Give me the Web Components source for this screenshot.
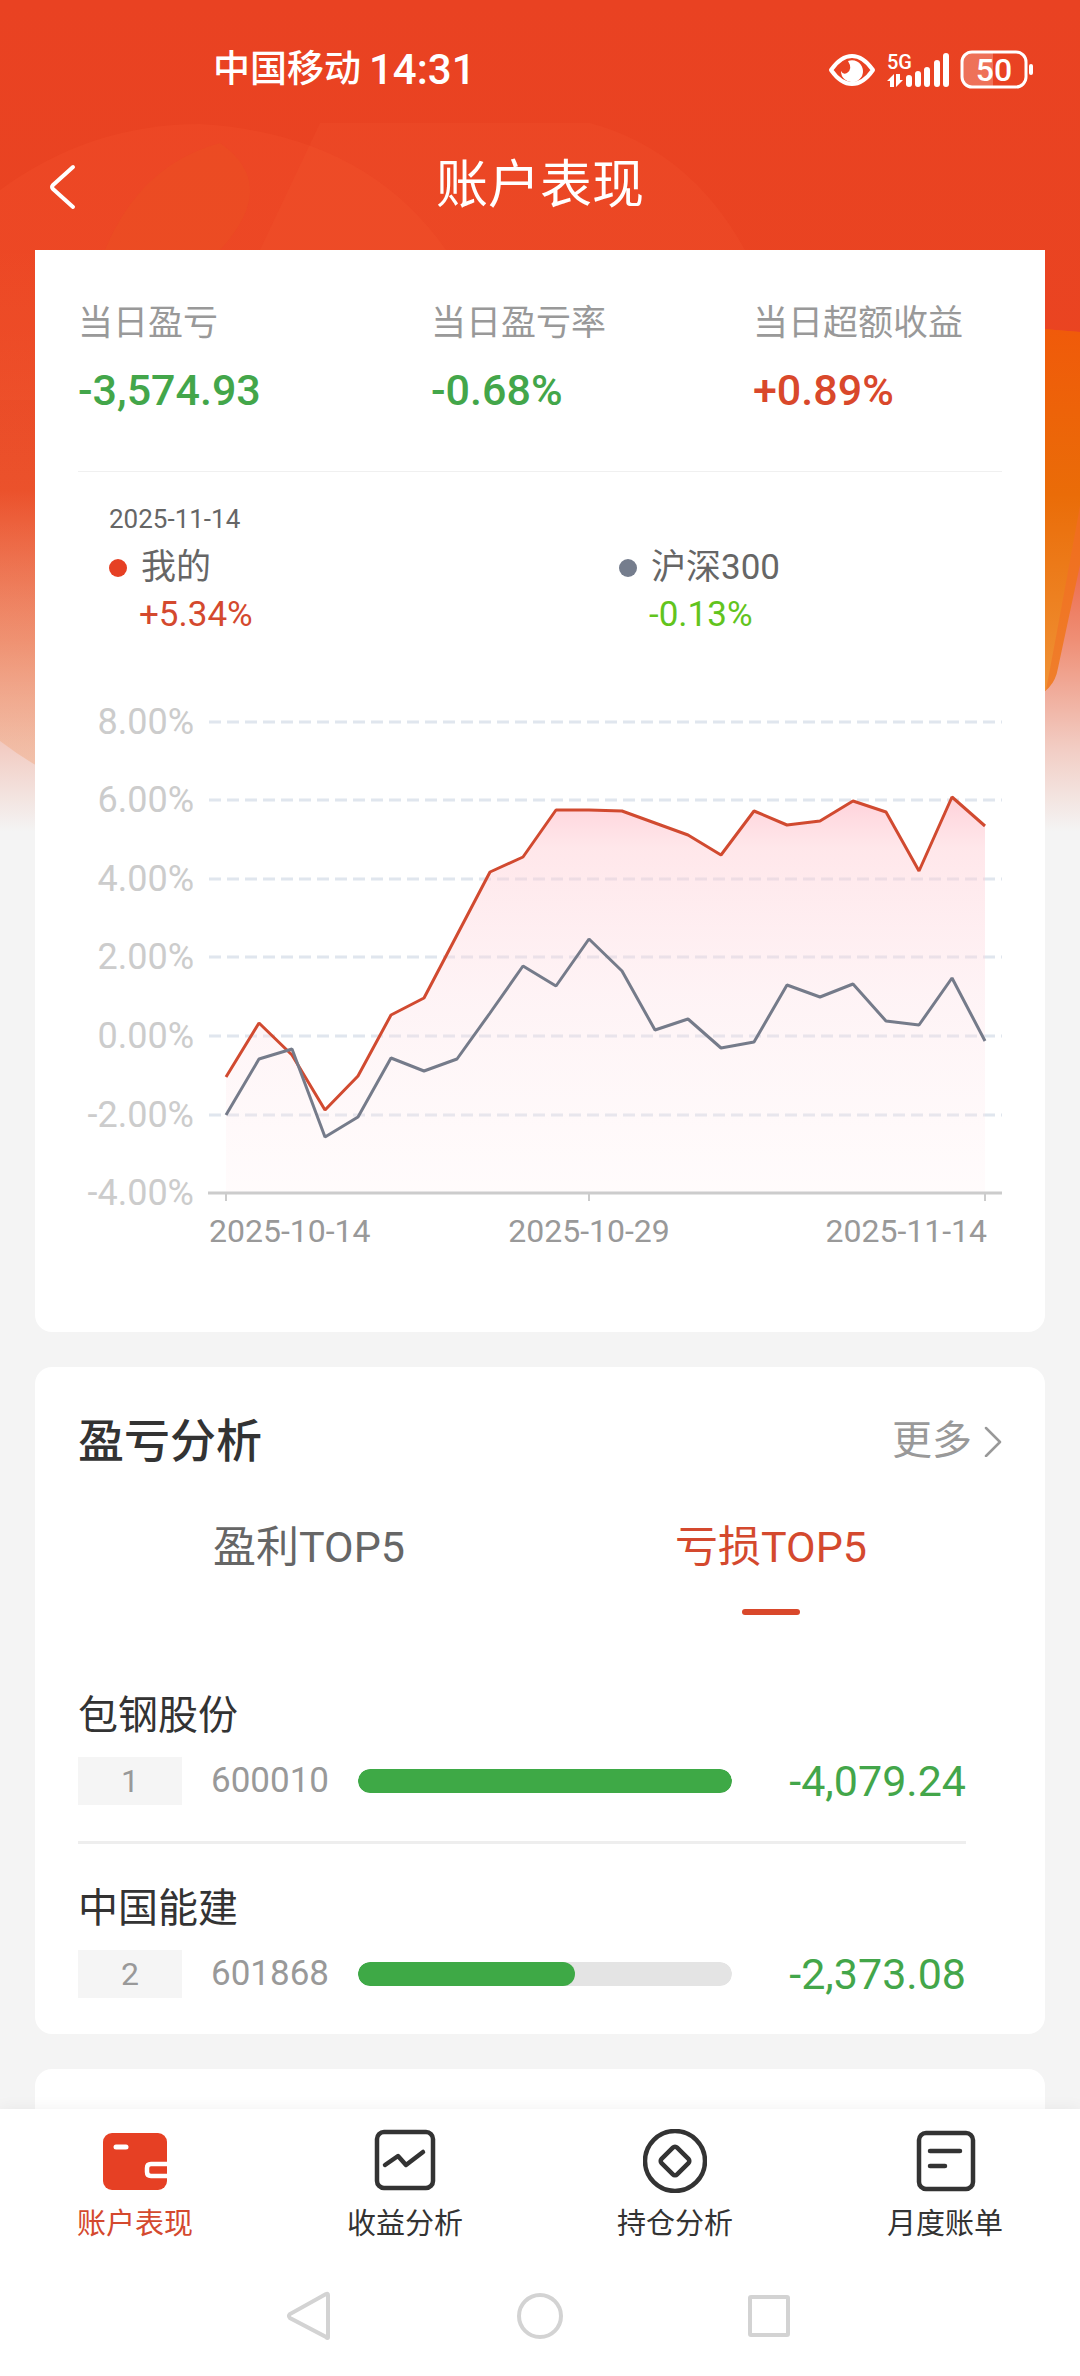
<!DOCTYPE html>
<html lang="zh-CN">
<head>
<meta charset="utf-8">
<meta name="viewport" content="width=device-width, initial-scale=1">
<title>账户表现</title>
<style>
  body {
    margin: 0;
    background: #f4f4f4;
    color: #333;
    font-family: Roboto, "Noto Sans CJK SC", sans-serif;
  }
</style>
</head>
<body>
<account-page></account-page>

<script>
// fondo degradado con las formas decorativas
class PageBackdrop extends HTMLElement {
  connectedCallback() {
    this.attachShadow({ mode: "open" }).innerHTML = `
      <style>
        :host { display: block; height: 832px; }
        svg { display: block; width: 100%; height: 100%; }
      </style>
      <svg viewBox="0 0 1080 832" preserveAspectRatio="none" aria-hidden="true">
        <defs>
          <linearGradient id="fade" x1="0" y1="0" x2="0" y2="1">
            <stop offset="0" stop-color="#e94222"/>
            <stop offset=".59" stop-color="#ea4521"/>
            <stop offset=".77" stop-color="#ef8f76"/>
            <stop offset=".9" stop-color="#f2cdc4"/>
            <stop offset="1" stop-color="#f4f4f4"/>
          </linearGradient>
          <linearGradient id="leaf" x1="0" y1="0" x2="0" y2="1">
            <stop offset="0" stop-color="#f05a0a"/>
            <stop offset=".45" stop-color="#ea6c08"/>
            <stop offset="1" stop-color="#f09438"/>
          </linearGradient>
          <linearGradient id="edge" x1="0" y1="0" x2="0" y2="1">
            <stop offset="0" stop-color="#f0580e"/>
            <stop offset="1" stop-color="#f0802c"/>
          </linearGradient>
          <linearGradient id="blob" x1="0" y1="0" x2="0" y2="1">
            <stop offset="0" stop-color="#f09060" stop-opacity="0"/>
            <stop offset="1" stop-color="#f09c68" stop-opacity=".35"/>
          </linearGradient>
        </defs>
        <rect width="1080" height="832" fill="url(#fade)"/>
        <path d="M0 250H60V778Q30 764 0 741Z" fill="url(#blob)"/>
        <path d="M320 123H590Q690 150 745 250H260Z" fill="#ff7040" opacity=".1"/>
        <path d="M0 190Q90 124 200 124Q365 134 446 250V400H0Z" fill="#ff6038" opacity=".14"/>
        <path d="M105 250Q140 165 220 143Q280 185 220 250Z" fill="#e85c20" opacity=".22"/>
        <path d="M1030 328L1080 332V565L1058 668Q1054 692 1030 698Z" fill="url(#edge)"/>
        <path d="M1030 328L1080 332V506L1058 626L1046 690L1030 698Z" fill="url(#leaf)"/>
      </svg>`;
  }
}

class StatusBar extends HTMLElement {
  connectedCallback() {
    this.attachShadow({ mode: "open" }).innerHTML = `
      <style>
        :host {
          display: flex;
          justify-content: space-between;
          align-items: center;
          box-sizing: border-box;
          height: 123px;
          padding: 16px 46px 0 213px;
          color: #fff;
        }
        .left, .right { display: flex; align-items: center; }
        .left { gap: 8px; font-weight: 500; line-height: 48px; }
        .carrier { font-size: 37px; }
        .time { font-size: 42px; }
        .right { gap: 10px; }
        svg { display: block; }
      </style>
      <div class="left">
        <span class="carrier">中国移动</span>
        <span class="time">14:31</span>
      </div>
      <div class="right">
        <svg width="48" height="36" viewBox="0 0 48 36" aria-hidden="true">
          <path d="M3 18C10 8 17 4 24 4S38 8 45 18C38 28 31 32 24 32S10 28 3 18Z" fill="none" stroke="#fff" stroke-width="4" stroke-linejoin="round"/>
          <path d="M20 9A11 11 0 1 1 13 19Q15 23 19 21Q25 17 20 9Z" fill="#fff"/>
        </svg>
        <svg width="64" height="48" viewBox="0 0 64 48" aria-hidden="true">
          <text x="1" y="23" font-size="20" font-weight="500" fill="#fff">5G</text>
          <path d="M23 32V38M32 28V38M41 24V38M51 17V38M60 10V38" stroke="#fff" stroke-width="6" stroke-linecap="round"/>
          <path d="M8 41V28L1 35H4V41ZM10 28V41L17 34H14V28Z" fill="#fff"/>
        </svg>
        <svg width="74" height="40" viewBox="0 0 74 40" aria-hidden="true">
          <path d="M11 3H33V37H11Q3 37 3 29V11Q3 3 11 3Z" fill="#fff" opacity=".25"/>
          <rect x="2" y="2" width="64" height="35" rx="10" fill="none" stroke="#fff" stroke-width="3"/>
          <rect x="69" y="14" width="4" height="11" rx="2" fill="#fff"/>
          <text x="34" y="31" font-size="32" font-weight="500" text-anchor="middle" fill="#fff">50</text>
        </svg>
      </div>`;
  }
}

class PageHeader extends HTMLElement {
  connectedCallback() {
    this.attachShadow({ mode: "open" }).innerHTML = `
      <style>
        :host {
          display: grid;
          grid-template-columns: 100px 1fr 100px;
          align-items: center;
          height: 127px;
          color: #fff;
        }
        button {
          border: 0;
          padding: 0 0 0 48px;
          background: none;
          color: inherit;
        }
        svg { display: block; }
        h1 {
          margin: 0;
          padding-bottom: 2px;
          font-size: 52px;
          font-weight: 400;
          line-height: 72px;
          text-align: center;
        }
      </style>
      <button type="button" aria-label="返回">
        <svg width="30" height="46" viewBox="0 0 30 46" fill="none" stroke="#fff" stroke-width="4" stroke-linecap="round" stroke-linejoin="round"><path d="M25 3L5 21Q3 23 5 25L25 43"/></svg>
      </button>
      <h1><slot></slot></h1>`;
  }
}

class AppCard extends HTMLElement {
  connectedCallback() {
    this.attachShadow({ mode: "open" }).innerHTML = `
      <style>
        :host {
          display: block;
          margin: 0 35px;
          padding: 0 43px;
          border-radius: 17px;
          background: #fff;
        }
        :host([flat]) { border-radius: 0 0 17px 17px; }
        :host([open]) { flex: 1; min-height: 40px; border-radius: 17px 17px 0 0; }
      </style>
      <slot></slot>`;
  }
}

class StatItem extends HTMLElement {
  connectedCallback() {
    this.attachShadow({ mode: "open" }).innerHTML = `
      <style>
        :host { display: block; color: #43a64a; }
        :host([up]) { color: #d9482b; }
        .label { color: #999; font-size: 35px; line-height: 48px; white-space: nowrap; }
        .value { margin-top: 12px; font-size: 43px; font-weight: 500; line-height: 60px; }
      </style>
      <div class="label">${this.getAttribute("label")}</div>
      <div class="value"><slot></slot></div>`;
  }
}

class LegendItem extends HTMLElement {
  connectedCallback() {
    this.attachShadow({ mode: "open" }).innerHTML = `
      <style>
        :host { display: block; font-size: 35px; line-height: 48px; }
        .name { display: flex; align-items: center; gap: 14px; color: #666; }
        .dot { width: 18px; height: 18px; border-radius: 50%; background: var(--dot); }
        .value { padding-left: 30px; line-height: 46px; color: var(--value); }
      </style>
      <div class="name"><span class="dot"></span>${this.getAttribute("name")}</div>
      <div class="value"><slot></slot></div>`;
  }
}

class TrendChart extends HTMLElement {
  connectedCallback() {
    const mine = [-1.04, 0.32, -0.48, -1.88, -1.03, 0.53, 0.96, 2.58, 4.18, 4.55, 5.75, 5.75,
      5.72, 5.43, 5.12, 4.61, 5.72, 5.36, 5.47, 5.97, 5.71, 4.19, 6.09, 5.34];
    const index = [-2.01, -0.58, -0.32, -2.56, -2.06, -0.55, -0.88, -0.58, 0.59, 1.78, 1.26, 2.47,
      1.66, 0.15, 0.43, -0.31, -0.14, 1.29, 0.98, 1.33, 0.39, 0.27, 1.48, -0.13];
    const x = (i) => 148 + i * 33;
    const y = (v) => Math.round(346 - v * 39.3);
    const points = (list) => list.map((v, i) => `${x(i)},${y(v)}`).join(" ");

    const grid = [8, 6, 4, 2, 0, -2]
      .map((v) => `<path d="M131 ${y(v)}H924" stroke="#e0e6ee" stroke-width="3" stroke-dasharray="12 6"/>`)
      .join("");
    const yLabels = [8, 6, 4, 2, 0, -2, -4]
      .map((v) => `<text x="116" y="${y(v) + 12}" font-size="36" text-anchor="end" fill="#ccc">${v.toFixed(2)}%</text>`)
      .join("");

    this.attachShadow({ mode: "open" }).innerHTML = `
      <style>
        :host { display: block; }
        svg { display: block; width: 100%; }
      </style>
      <svg viewBox="0 0 924 560" role="img" aria-label="收益走势">
        <defs>
          <linearGradient id="area" x1="0" y1="0" x2="0" y2="1">
            <stop offset="0" stop-color="#ffb9c6" stop-opacity=".65"/>
            <stop offset=".13" stop-color="#ffcdd4" stop-opacity=".48"/>
            <stop offset=".5" stop-color="#fddbe2" stop-opacity=".33"/>
            <stop offset="1" stop-color="#ffeef0" stop-opacity=".22"/>
          </linearGradient>
        </defs>
        ${grid}
        <polygon points="148,503 ${points(mine)} ${x(23)},503" fill="url(#area)"/>
        <path d="M130 503H924" stroke="#ccc" stroke-width="3"/>
        <path d="M148 503V511M511 503V511M907 503V511" stroke="#ccc" stroke-width="2"/>
        <polyline points="${points(mine)}" fill="none" stroke="#d14a30" stroke-width="3" stroke-linejoin="bevel"/>
        <polyline points="${points(index)}" fill="none" stroke="#757b8a" stroke-width="3" stroke-linejoin="bevel"/>
        ${yLabels}
        <g font-size="32" fill="#999">
          <text x="131" y="552">2025-10-14</text>
          <text x="511" y="552" text-anchor="middle">2025-10-29</text>
          <text x="909" y="552" text-anchor="end">2025-11-14</text>
        </g>
      </svg>`;
  }
}

class TopTabs extends HTMLElement {
  connectedCallback() {
    this.attachShadow({ mode: "open" }).innerHTML = `
      <style>
        :host { display: grid; grid-template-columns: 1fr 1fr; }
        button {
          display: flex;
          flex-direction: column;
          align-items: center;
          gap: 32px;
          border: 0;
          padding: 0;
          background: none;
          color: #666;
          font: inherit;
          font-size: 43px;
          line-height: 60px;
        }
        button::after {
          content: "";
          width: 58px;
          height: 6px;
          border-radius: 3px;
        }
        button[aria-selected="true"] { color: #d4492e; }
        button[aria-selected="true"]::after { background: #d9482b; }
      </style>
      <button type="button" role="tab" aria-selected="false">盈利TOP5</button>
      <button type="button" role="tab" aria-selected="true">亏损TOP5</button>`;
    this.setAttribute("role", "tablist");

    const tabs = this.shadowRoot.querySelectorAll("button");
    tabs.forEach((tab) => {
      tab.addEventListener("click", () => {
        tabs.forEach((t) => t.setAttribute("aria-selected", t === tab));
      });
    });
  }
}

class StockRow extends HTMLElement {
  connectedCallback() {
    const name = this.getAttribute("name");
    this.attachShadow({ mode: "open" }).innerHTML = `
      <style>
        :host { display: block; padding: 35px 0 36px; }
        :host(:not(:last-child)) { border-bottom: 3px solid #eee; }
        .name { color: #333; font-size: 40px; line-height: 60px; }
        .row { display: flex; align-items: center; gap: 29px; margin-top: 11px; height: 48px; }
        .rank {
          width: 104px;
          background: #f5f5f5;
          color: #999;
          font-size: 32px;
          line-height: 48px;
          text-align: center;
        }
        .code { width: 118px; color: #999; font-size: 35px; line-height: 48px; }
        progress {
          flex: 1;
          min-width: 0;
          height: 24px;
          appearance: none;
          border: 0;
          border-radius: 12px;
          overflow: hidden;
        }
        progress::-webkit-progress-bar { background: #e4e4e4; border-radius: 12px; }
        progress::-webkit-progress-value { background: #3ea946; border-radius: 12px; }
        .value { width: 205px; color: #43a64a; font-size: 43px; line-height: 48px; text-align: right; }
      </style>
      <div class="name">${name}</div>
      <div class="row">
        <span class="rank">${this.getAttribute("rank")}</span>
        <span class="code">${this.getAttribute("code")}</span>
        <progress max="100" value="${this.getAttribute("percent")}" aria-label="${name}"></progress>
        <span class="value"><slot></slot></span>
      </div>`;
  }
}

class TabBar extends HTMLElement {
  connectedCallback() {
    const items = [
      ["账户表现", `<rect y="4" width="64" height="57" rx="9" fill="#e64024"/>
        <path d="M13 18H23" stroke="#fff" stroke-width="5"/>
        <path d="M64 35H48Q44 35 44 39V43Q44 47 48 47H64" stroke="#fff" stroke-linecap="butt"/>`],
      ["收益分析", `<rect x="4" y="3" width="56" height="56" rx="7"/><path d="M12 36L25 27L33 36L50 23"/>`],
      ["持仓分析", `<circle cx="32" cy="32" r="30"/><rect x="21" y="21" width="22" height="22" rx="3" transform="rotate(45 32 32)"/>`],
      ["月度账单", `<rect x="6" y="4" width="54" height="56" rx="7"/><path d="M17 22H47M17 37H32"/>`],
    ];
    this.attachShadow({ mode: "open" }).innerHTML = `
      <style>
        :host { display: block; }
        nav { display: grid; grid-template-columns: repeat(4, 1fr); padding: 20px 0 12px; }
        a {
          display: flex;
          flex-direction: column;
          align-items: center;
          gap: 11px;
          color: #333;
          font-size: 29px;
          line-height: 40px;
          text-decoration: none;
        }
        a[aria-current] { color: #d4492e; }
        svg { display: block; }
      </style>
      <nav>
        ${items
          .map(
            ([label, icon], i) => `
          <a href="#"${i === 0 ? ' aria-current="page"' : ""}>
            <svg width="64" height="64" viewBox="0 0 64 64" fill="none" ${i === 0 ? "" : 'stroke="#333"'} stroke-width="4.5" stroke-linecap="round" stroke-linejoin="round" aria-hidden="true">${icon}</svg>
            ${label}
          </a>`
          )
          .join("")}
      </nav>`;
  }
}

class SystemNav extends HTMLElement {
  connectedCallback() {
    const icons = [
      ["后退", `<path d="M50 11V53Q50 55 48 53L12 34Q10 32 12 30L48 10Q50 9 50 11Z"/>`],
      ["主屏幕", `<circle cx="32" cy="32" r="21"/>`],
      ["最近任务", `<rect x="12" y="13" width="38" height="38" rx="1"/>`],
    ];
    this.attachShadow({ mode: "open" }).innerHTML = `
      <style>
        :host { display: flex; justify-content: center; align-items: center; gap: 166px; height: 120px; }
        button { border: 0; padding: 0; background: none; }
        svg { display: block; }
      </style>
      ${icons
        .map(
          ([label, icon]) => `<button type="button" aria-label="${label}">
            <svg width="64" height="64" viewBox="0 0 64 64" fill="none" stroke="#d3d3d3" stroke-width="4">${icon}</svg>
          </button>`
        )
        .join("")}`;
  }
}

class AccountPage extends HTMLElement {
  connectedCallback() {
    this.attachShadow({ mode: "open" }).innerHTML = `
      <style>
        :host { display: grid; min-height: 100vh; }
        page-backdrop, .page { grid-area: 1 / 1; min-width: 0; }
        page-backdrop { align-self: start; }
        .page { display: flex; flex-direction: column; z-index: 1; }
        .stats {
          display: grid;
          grid-template-columns: 353fr 322fr 249fr;
          padding: 50px 0 51px;
          border-bottom: 1px solid #f0f0f0;
        }
        .date { padding: 27px 0 5px 31px; color: #666; font-size: 26px; line-height: 40px; }
        .legend { display: grid; grid-template-columns: 510fr 383fr; padding-left: 31px; }
        trend-chart { margin: 52px 0 0; padding-bottom: 82px; }
        .mine { --dot: #e64024; --value: #d4492e; }
        .index { --dot: #757d8d; --value: #62c41d; }
        .analysis, .next { margin-top: 35px; }
        .title { display: flex; justify-content: space-between; align-items: center; padding: 44px 0 46px; }
        h2 { margin: 0; color: #333; font-size: 46px; font-weight: 500; line-height: 60px; }
        .more {
          display: flex;
          align-items: center;
          gap: 12px;
          color: #999;
          font-size: 40px;
          line-height: 60px;
          text-decoration: none;
        }
        .list { padding: 36px 36px 0 0; }
        footer { background: #fff; box-shadow: 0 0 16px rgba(0, 0, 0, 0.06); z-index: 1; }
      </style>
      <page-backdrop></page-backdrop>
      <div class="page">
        <status-bar></status-bar>
        <page-header>账户表现</page-header>
        <app-card flat>
          <div class="stats">
            <stat-item label="当日盈亏">-3,574.93</stat-item>
            <stat-item label="当日盈亏率">-0.68%</stat-item>
            <stat-item label="当日超额收益" up>+0.89%</stat-item>
          </div>
          <div class="date">2025-11-14</div>
          <div class="legend">
            <legend-item class="mine" name="我的">+5.34%</legend-item>
            <legend-item class="index" name="沪深300">-0.13%</legend-item>
          </div>
          <trend-chart></trend-chart>
        </app-card>
        <app-card class="analysis">
          <div class="title">
            <h2>盈亏分析</h2>
            <a class="more" href="#">更多
              <svg width="18" height="32" viewBox="0 0 18 32" fill="none" stroke="#999" stroke-width="2.5" stroke-linecap="round" stroke-linejoin="round" aria-hidden="true"><path d="M2 3L16 17L2 31"/></svg>
            </a>
          </div>
          <top-tabs></top-tabs>
          <div class="list">
            <stock-row rank="1" name="包钢股份" code="600010" percent="100">-4,079.24</stock-row>
            <stock-row rank="2" name="中国能建" code="601868" percent="58">-2,373.08</stock-row>
          </div>
        </app-card>
        <app-card class="next" open></app-card>
        <footer>
          <tab-bar></tab-bar>
          <system-nav></system-nav>
        </footer>
      </div>`;
  }
}

customElements.define("page-backdrop", PageBackdrop);
customElements.define("status-bar", StatusBar);
customElements.define("page-header", PageHeader);
customElements.define("app-card", AppCard);
customElements.define("stat-item", StatItem);
customElements.define("legend-item", LegendItem);
customElements.define("trend-chart", TrendChart);
customElements.define("top-tabs", TopTabs);
customElements.define("stock-row", StockRow);
customElements.define("tab-bar", TabBar);
customElements.define("system-nav", SystemNav);
customElements.define("account-page", AccountPage);
</script>
</body>
</html>
